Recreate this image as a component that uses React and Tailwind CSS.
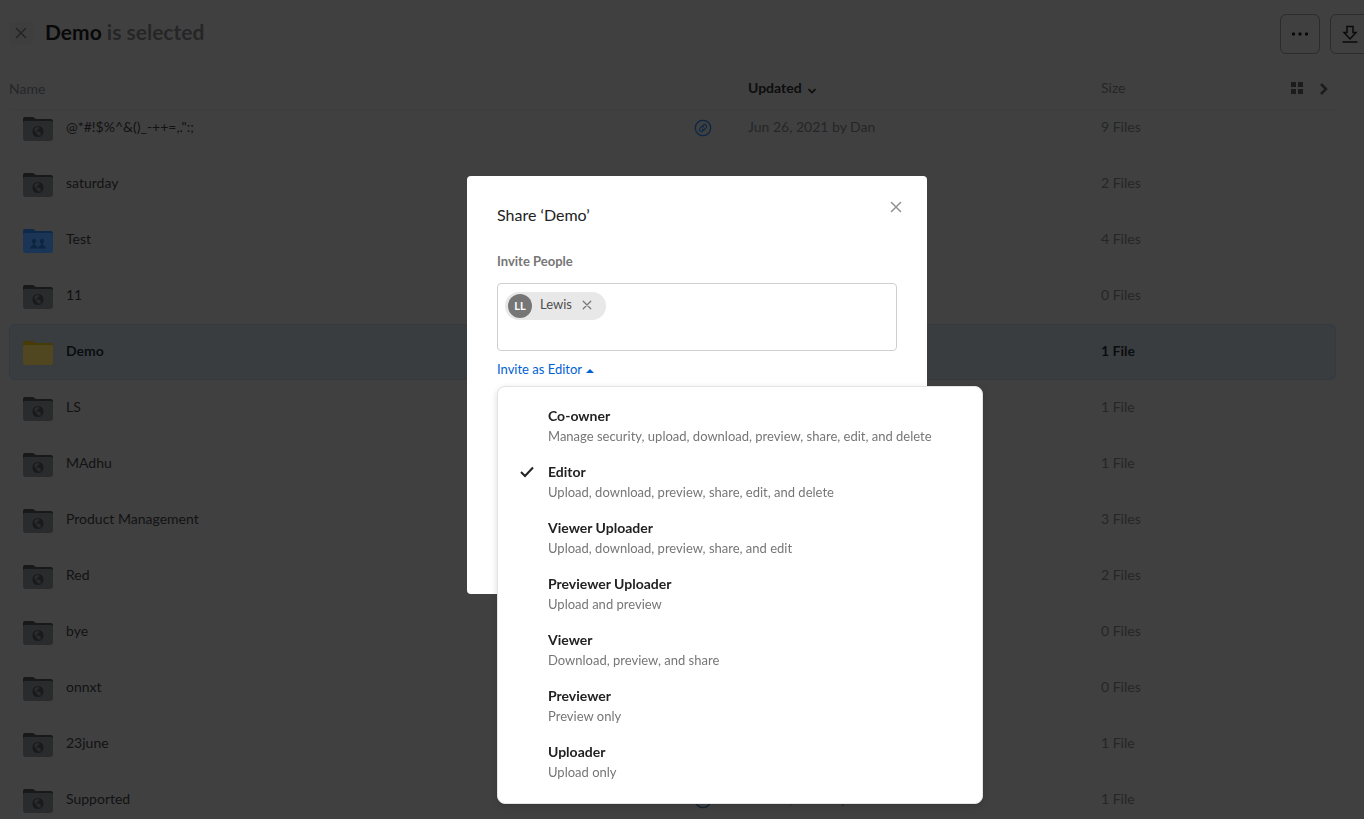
import { useState } from "react";

const files = [
  { name: '@*#!$%^&()_-++=,.":;', type: "external", size: "9 Files", updated: "Jun 26, 2021 by Dan", link: "text-[#0c2746]" },
  { name: "saturday", type: "external", size: "2 Files" },
  { name: "Test", type: "shared", size: "4 Files" },
  { name: "11", type: "external", size: "0 Files" },
  { name: "Demo", type: "personal", size: "1 File", selected: true },
  { name: "LS", type: "external", size: "1 File" },
  { name: "MAdhu", type: "external", size: "1 File" },
  { name: "Product Management", type: "external", size: "3 Files" },
  { name: "Red", type: "external", size: "2 Files" },
  { name: "bye", type: "external", size: "0 Files" },
  { name: "onnxt", type: "external", size: "0 Files" },
  { name: "23june", type: "external", size: "1 File" },
  { name: "Supported", type: "external", size: "1 File", updated: "Jun 26, 2021 by Dan", link: "text-[#14202c]" },
];

const roles = [
  { name: "Co-owner", description: "Manage security, upload, download, preview, share, edit, and delete" },
  { name: "Editor", description: "Upload, download, preview, share, edit, and delete" },
  { name: "Viewer Uploader", description: "Upload, download, preview, share, and edit" },
  { name: "Previewer Uploader", description: "Upload and preview" },
  { name: "Viewer", description: "Download, preview, and share" },
  { name: "Previewer", description: "Preview only" },
  { name: "Uploader", description: "Upload only" },
];

const folderColors = {
  external: { back: "#18191a", body: "#2a2b2d", mark: "#191b1c" },
  shared: { back: "#0f294a", body: "#1b3556", mark: "#0d2541" },
  personal: { back: "#463b06", body: "#504720", mark: "none" },
};

function FolderIcon({ type }) {
  const { back, body, mark } = folderColors[type];
  return (
    <svg width="32" height="32" viewBox="0 0 32 32" className="shrink-0" aria-hidden="true">
      <path d="M1 7a2 2 0 0 1 2-2h7.500c1.600 0 2.200 2 4 2H29a2 2 0 0 1 2 2v6H1z" fill={back} />
      <path d="M1 10.500A1.500 1.500 0 0 1 2.500 9h27a1.500 1.500 0 0 1 1.500 1.500V26a3 3 0 0 1-3 3H4a3 3 0 0 1-3-3z" fill={body} />
      {type === "external" && (
        <>
          <circle cx="16" cy="19.500" r="5" fill="none" stroke={mark} strokeWidth="1.200" />
          <path d="M11.200 17.500l3.300 3v1.500l2 1.500v1c-3 .2-5.500-2-5.500-5zM15 15l2.500.2v1.300l-1.500 1-1 1.200v1h3l.8 2 1.400.6c1.600-3 .3-6.300-2.700-7.400z" fill={mark} />
        </>
      )}
      {type === "shared" && (
        <g fill={mark}>
          <circle cx="12" cy="17" r="2.200" />
          <circle cx="20" cy="17" r="2.200" />
          <path d="M8.500 24.500v-1c0-1 .8-1.600 2.500-2.500v-2h2v2c1.700.9 2.500 1.500 2.500 2.500v1zM16.500 24.500v-1c0-1 .8-1.600 2.500-2.500v-2h2v2c1.700.9 2.500 1.500 2.500 2.500v1z" />
        </g>
      )}
    </svg>
  );
}

function CloseIcon({ size }) {
  return (
    <svg width={size} height={size} viewBox="0 0 12 12" fill="none" stroke="currentColor" strokeWidth="1.500" strokeLinecap="round" aria-hidden="true">
      <path d="M1.500 1.500l9 9M10.500 1.500l-9 9" />
    </svg>
  );
}

function LinkIcon({ className }) {
  return (
    <svg width="18" height="18" viewBox="0 0 18 18" fill="none" stroke="currentColor" className={className} aria-hidden="true">
      <circle cx="9" cy="9" r="7.700" strokeWidth="1.300" />
      <g transform="rotate(-45 9 9)" strokeWidth="1.100">
        <path d="M8.200 11H6.800a2 2 0 0 1 0-4h1.600a2 2 0 0 1 2 2M9.800 7h1.400a2 2 0 0 1 0 4H9.600a2 2 0 0 1-2-2" />
      </g>
    </svg>
  );
}

function Toolbar() {
  return (
    <header className="flex h-[66px] items-center justify-between overflow-hidden pl-[9px]">
      <div className="flex items-center gap-3">
        <button aria-label="Clear selection" className="flex h-6 w-6 items-center justify-center rounded bg-[#3e3e3f] text-[#242424]">
          <CloseIcon size={12} />
        </button>
        <h1 className="pb-0.5 text-[21px] leading-7 font-bold text-[#262626]">
          <span className="text-[#090909]">Demo</span> is selected
        </h1>
      </div>
      <div className="-mr-[6px] flex shrink-0 gap-[10px] pt-0.5 text-[#0a0a0a]">
        <button aria-label="More options" className="flex h-10 w-10 items-center justify-center rounded-md border border-[#2c2c2c]">
          <svg width="18" height="4" viewBox="0 0 18 4" fill="currentColor" aria-hidden="true">
            <circle cx="2.500" cy="2" r="1.700" />
            <circle cx="9" cy="2" r="1.700" />
            <circle cx="15.500" cy="2" r="1.700" />
          </svg>
        </button>
        <button aria-label="Download" className="flex h-10 w-10 items-center justify-center rounded-md border border-[#2c2c2c]">
          <svg width="16" height="18" viewBox="0 0 16 18" fill="none" stroke="currentColor" strokeWidth="1.500" aria-hidden="true">
            <path d="M5 1.500h6v6h3L8 14 2 7.500h3zM.5 17h15" />
          </svg>
        </button>
      </div>
    </header>
  );
}

function FileRow({ file, first }) {
  const cell = file.selected
    ? "border-y border-[#343a41] bg-[#3a3d40] font-bold text-[#0a0d10]"
    : "text-[#252627]";
  const height = first ? "h-[46px] pb-3" : "h-14 pb-0.5";

  return (
    <tr>
      <td className={`${height} ${cell} ${file.selected ? "rounded-l-md border-l pl-3" : "pl-[13px]"}`}>
        <div className="flex items-center pt-0.5 pr-9">
          <FolderIcon type={file.type} />
          <a href="#" className={`ml-3 grow pb-0.5 ${file.selected ? "" : "text-[#121212]"}`}>
            {file.name}
          </a>
          {file.link && <LinkIcon className={file.link} />}
        </div>
      </td>
      <td className={`${height} ${cell}`}>{file.updated}</td>
      <td className={`${height} ${cell} ${file.selected ? "rounded-r-md border-r" : ""}`}>{file.size}</td>
    </tr>
  );
}

function FileTable() {
  return (
    <div className="pr-7 pl-[9px]">
      <table className="w-full table-fixed border-separate border-spacing-0 text-left text-sm leading-5">
        <thead>
          <tr className="text-[#252627]">
            <th className="h-11 border-b border-[#3d3d3e] pt-0.5 font-normal">Name</th>
            <th className="h-11 w-[353px] border-b border-[#3d3d3e] font-bold text-[#0d0d0d]">
              <button className="flex items-center gap-1.5">
                Updated
                <svg width="8" height="6" viewBox="0 0 8 6" fill="none" stroke="currentColor" strokeWidth="1.600" className="mt-1.5" aria-hidden="true">
                  <path d="M.5 1L4 4.500 7.500 1" />
                </svg>
              </button>
            </th>
            <th className="h-11 w-[235px] border-b border-[#3d3d3e] font-normal">
              <div className="flex items-center justify-between pr-2">
                Size
                <div className="flex items-center gap-4 pt-0.5 text-[#1c1c1c]">
                  <button aria-label="Grid view">
                    <svg width="13" height="13" viewBox="0 0 13 13" fill="currentColor" aria-hidden="true">
                      <rect width="5" height="5" rx="0.500" />
                      <rect x="7" width="5" height="5" rx="0.500" />
                      <rect y="7" width="5" height="5" rx="0.500" />
                      <rect x="7" y="7" width="5" height="5" rx="0.500" />
                    </svg>
                  </button>
                  <button aria-label="Show details">
                    <svg width="8" height="12" viewBox="0 0 8 12" fill="none" stroke="currentColor" strokeWidth="2.500" aria-hidden="true">
                      <path d="M1 1l5 5-5 5" />
                    </svg>
                  </button>
                </div>
              </div>
            </th>
          </tr>
        </thead>
        <tbody>
          {files.map((file, index) => (
            <FileRow key={file.name} file={file} first={index === 0} />
          ))}
        </tbody>
      </table>
    </div>
  );
}

function RoleMenu({ role, onSelect }) {
  return (
    <div
      role="menu"
      className="absolute top-[210px] left-[30px] w-[486px] rounded-lg border border-[#e4e4e8] bg-white pt-[11px] pb-[13px] shadow-[0_2px_6px_rgba(0,0,0,0.15)]"
    >
      {roles.map(({ name, description }) => (
        <button
          key={name}
          role="menuitemradio"
          aria-checked={role === name}
          onClick={() => onSelect(name)}
          className="flex w-full py-2 pl-[21px] text-left"
        >
          <span className="flex h-5 w-[29px] shrink-0 items-center text-[#222222]">
            {role === name && (
              <svg width="16" height="12" viewBox="0 0 16 12" fill="none" stroke="currentColor" strokeWidth="2" aria-hidden="true">
                <path d="M2 6l4 4 8-8.500" />
              </svg>
            )}
          </span>
          <span>
            <span className="block text-sm leading-5 font-bold text-[#222222]">{name}</span>
            <span className="block text-[13px] leading-5 text-[#767676]">{description}</span>
          </span>
        </button>
      ))}
    </div>
  );
}

function ShareDialog() {
  const [role, setRole] = useState("Editor");
  const [menuOpen, setMenuOpen] = useState(true);
  const [invited, setInvited] = useState(true);

  const selectRole = (name) => {
    setRole(name);
    setMenuOpen(false);
  };

  return (
    <div className="fixed inset-0 flex items-start justify-center pt-44 pl-[30px]">
      <div role="dialog" aria-labelledby="share-title" className="relative min-h-[418px] w-[460px] rounded bg-white px-[30px] pt-[27px]">
        <div className="flex items-start justify-between">
          <h2 id="share-title" className="text-base leading-6 text-[#222222]">
            Share ‘Demo’
          </h2>
          <button aria-label="Close" className="-mt-1.5 -mr-[9px] p-1 text-[#909090]">
            <CloseIcon size={12} />
          </button>
        </div>

        <label htmlFor="invite" className="mt-6 block text-[13px] leading-5 font-bold text-[#767676]">
          Invite People
        </label>
        <div className="mt-3 flex h-[68px] items-start gap-2 rounded border border-[#cfcfd2] px-[7px] py-2">
          {invited && (
            <span className="flex h-7 items-center rounded-full bg-[#e8e8e8] pr-3 pl-[3px] text-[13px] text-[#4e4e4e]">
              <span className="mr-2 flex h-6 w-6 items-center justify-center rounded-full bg-[#767676] text-[11px] font-bold text-white">
                LL
              </span>
              <span className="pb-0.5">Lewis</span>
              <button aria-label="Remove Lewis" onClick={() => setInvited(false)} className="ml-2 px-0.5 pb-0.5 text-[#767676]">
                <CloseIcon size={10} />
              </button>
            </span>
          )}
          <input id="invite" type="text" className="h-7 min-w-0 grow outline-none" />
        </div>

        <button
          aria-haspopup="menu"
          aria-expanded={menuOpen}
          onClick={() => setMenuOpen(!menuOpen)}
          className="mt-2 flex items-center gap-1 text-[13px] leading-5 text-[#0061d5]"
        >
          Invite as {role}
          <svg width="8" height="4" viewBox="0 0 8 4" fill="currentColor" className="mt-1" aria-hidden="true">
            <path d="M0 4l4-4 4 4z" />
          </svg>
        </button>

        {menuOpen && <RoleMenu role={role} onSelect={selectRole} />}
      </div>
    </div>
  );
}

export default function App() {
  return (
    <div className="h-screen overflow-hidden bg-[#404041] font-['Lato','Liberation_Sans',sans-serif]">
      <Toolbar />
      <FileTable />
      <ShareDialog />
    </div>
  );
}
